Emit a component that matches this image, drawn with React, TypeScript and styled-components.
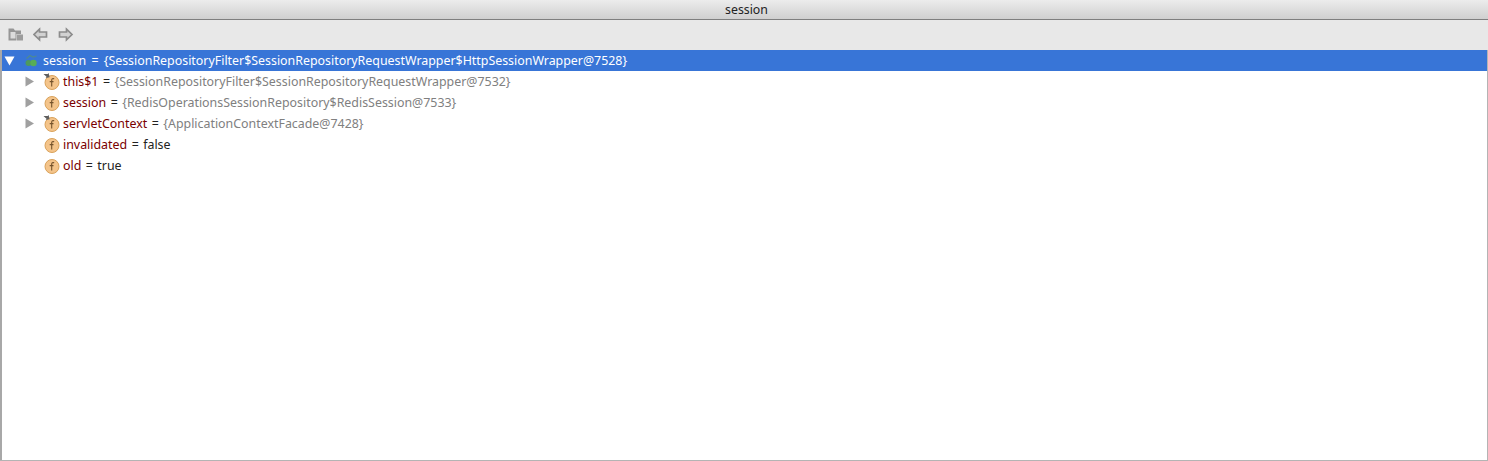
import React from 'react';
import styled, { createGlobalStyle } from 'styled-components';

const Global = createGlobalStyle`
  html, body { margin: 0; padding: 0; background: #fff; }
  body { font-family: "Noto Sans", "Open Sans", sans-serif; }
`;

const Frame = styled.div`
  width: 1488px;
  height: 461px;
  box-sizing: border-box;
  display: flex;
  flex-direction: column;
  overflow: hidden;
  background: #fff;
  border-bottom: 1px solid #b4b4b4;
`;

const TitleBar = styled.div`
  height: 19px;
  flex: none;
  display: flex;
  align-items: center;
  justify-content: center;
  padding-left: 5px;
  background: linear-gradient(#ececec, #d0d0d0);
  border-bottom: 1px solid #7f7f7f;
  font-size: 12.3px;
  color: #222;
`;

const Toolbar = styled.div`
  height: 30px;
  flex: none;
  display: flex;
  align-items: center;
  gap: 9px;
  padding-left: 8px;
  background: #e8e8e8;
`;

const ToolIcon = styled.svg`
  width: 16px;
  height: 16px;
  display: block;
`;

const Tree = styled.div`
  flex: 1;
  display: flex;
  flex-direction: column;
  border-left: 2px solid #a8a8a8;
  border-right: 1px solid #b4b4b4;
`;

const Row = styled.div<{ $selected?: boolean; $indent?: boolean }>`
  height: 21px;
  flex: none;
  display: flex;
  align-items: center;
  padding-left: ${p => (p.$indent ? 22 : 2)}px;
  background: ${p => (p.$selected ? '#3875d7' : 'transparent')};
  font-size: 12.4px;
  white-space: pre;
  color: ${p => (p.$selected ? '#fff' : '#222')};
`;

const ArrowSlot = styled.span`
  width: 19px;
  height: 21px;
  flex: none;
  display: flex;
  align-items: center;
`;

const NodeIcon = styled.svg`
  width: 18px;
  height: 18px;
  flex: none;
  display: block;
  margin-right: 2px;
`;

const Name = styled.span<{ $selected?: boolean }>`
  color: ${p => (p.$selected ? '#fff' : '#7a0000')};
`;

const Eq = styled.span<{ $selected?: boolean }>`
  margin: 0 ${p => (p.$selected ? 2 : 1.25)}px;
  color: ${p => (p.$selected ? '#fff' : '#222')};
`;

const Value = styled.span`
  color: #222;
`;

const Ref = styled.span<{ $selected?: boolean }>`
  color: ${p => (p.$selected ? '#fff' : '#808080')};
`;

const Arrow = ({ open, color }: { open?: boolean; color: string }) => (
  <svg width="11" height="11" viewBox="0 0 11 11">
    <path d={open ? 'M0.5 1.5H10.5L5.5 10.5Z' : 'M1.5 0.5V10.5L10 5.5Z'} fill={color} />
  </svg>
);

const FieldIcon = ({ pinned }: { pinned?: boolean }) => (
  <NodeIcon viewBox="0 0 18 18">
    <circle cx="9" cy="9.5" r="7" fill="#f4c48a" stroke="#d9a25b" strokeWidth="1" />
    <path d="M11.2 5.8c-1.6-.5-2.5.1-2.5 1.5V13.6M6.7 8.6h3.8" fill="none" stroke="#74522b" strokeWidth="1.1" />
    {pinned && <path d="M0.5 1l4.2.1.9-1 1 4.2-3.9.8.8-1.4L0.5 1z" fill="#5f5f5f" />}
  </NodeIcon>
);

const SessionIcon = () => (
  <NodeIcon viewBox="0 0 18 18">
    <path d="M3.5 6.5l3.5-3 3 1.5 3.5-1" stroke="#4f8a90" strokeWidth="1.2" fill="none" />
    <circle cx="5.5" cy="11" r="3" fill="#4d9a5e" />
    <circle cx="10.5" cy="11" r="3.2" fill="#58ad55" />
  </NodeIcon>
);

const fields = [
  { name: 'this$1', ref: '{SessionRepositoryFilter$SessionRepositoryRequestWrapper@7532}', pinned: true, arrow: true },
  { name: 'session', ref: '{RedisOperationsSessionRepository$RedisSession@7533}', arrow: true },
  { name: 'servletContext', ref: '{ApplicationContextFacade@7428}', pinned: true, arrow: true },
  { name: 'invalidated', value: 'false' },
  { name: 'old', value: 'true' },
];

export default function App() {
  return (
    <Frame>
      <Global />
      <TitleBar>session</TitleBar>
      <Toolbar>
        <ToolIcon viewBox="0 0 16 16">
          <path d="M0.5 1.5h5l1.5 2h6v3.5H8.5v6.5h-8z" fill="#969696" />
          <rect x="2.5" y="5" width="5" height="6.5" fill="#dcdcdc" />
          <rect x="9" y="7.5" width="6" height="6" fill="#9c9c9c" />
        </ToolIcon>
        <ToolIcon viewBox="0 0 16 16">
          <path d="M6.5 2.2L1 7.5l5.5 5.3V10H13.5V5H6.5z" fill="#d2d2d2" stroke="#8c8c8c" strokeWidth="1.7" />
        </ToolIcon>
        <ToolIcon viewBox="0 0 16 16">
          <path d="M8.5 2.2L14 7.5l-5.5 5.3V10H1.5V5h7z" fill="#d2d2d2" stroke="#8c8c8c" strokeWidth="1.7" />
        </ToolIcon>
      </Toolbar>
      <Tree>
        <Row $selected>
          <ArrowSlot><Arrow open color="#fff" /></ArrowSlot>
          <SessionIcon />
          <Name $selected>session</Name>
          <Eq $selected> = </Eq>
          <Ref $selected>{'{SessionRepositoryFilter$SessionRepositoryRequestWrapper$HttpSessionWrapper@7528}'}</Ref>
        </Row>
        {fields.map(f => (
          <Row key={f.name} $indent>
            <ArrowSlot>{f.arrow && <Arrow color="#a0a0a0" />}</ArrowSlot>
            <FieldIcon pinned={f.pinned} />
            <Name>{f.name}</Name>
            <Eq> = </Eq>
            {f.ref ? <Ref>{f.ref}</Ref> : <Value>{f.value}</Value>}
          </Row>
        ))}
      </Tree>
    </Frame>
  );
}
